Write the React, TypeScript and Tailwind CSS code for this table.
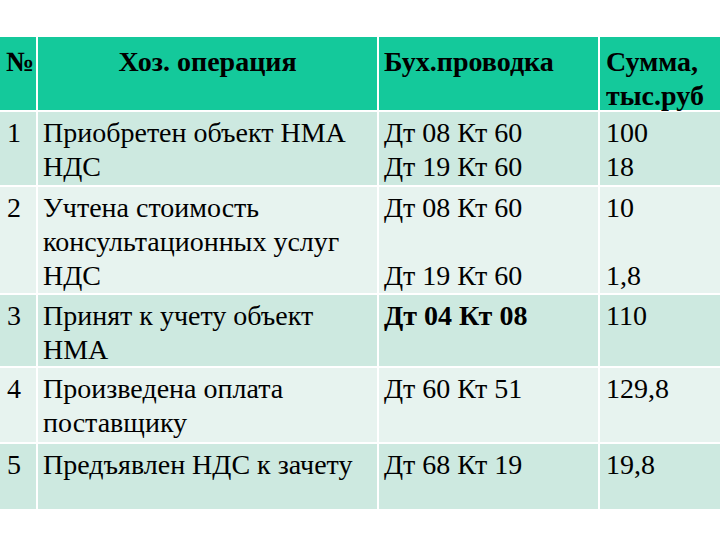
import React from 'react';

type Row = {
  n: string;
  op: string[];
  entries: React.ReactNode[];
  sums: string[];
  h: string;
  bg: string;
};

const rows: Row[] = [
  { n: '1', op: ['Приобретен объект НМА', 'НДС'], entries: ['Дт 08 Кт 60', 'Дт 19 Кт 60'], sums: ['100', '18'], h: 'h-[73px]', bg: 'bg-[#cde9e0]' },
  { n: '2', op: ['Учтена стоимость', 'консультационных услуг', 'НДС'], entries: ['Дт 08 Кт 60', '\u00a0', 'Дт 19 Кт 60'], sums: ['10', '\u00a0', '1,8'], h: 'h-[106px]', bg: 'bg-[#e7f3ef]' },
  { n: '3', op: ['Принят к учету объект', 'НМА'], entries: [<b key="b">Дт 04 Кт 08</b>], sums: ['110'], h: 'h-[71px]', bg: 'bg-[#cde9e0]' },
  { n: '4', op: ['Произведена оплата', 'поставщику'], entries: ['Дт 60 Кт 51'], sums: ['129,8'], h: 'h-[74px]', bg: 'bg-[#e7f3ef]' },
  { n: '5', op: ['Предъявлен НДС к зачету'], entries: ['Дт 68 Кт 19'], sums: ['19,8'], h: 'h-[65px]', bg: 'bg-[#cde9e0]' },
];

export default function App() {
  return (
    <div className="w-[720px] h-[540px] bg-white pt-[37px] text-black text-[28px] leading-[34px] font-['Liberation_Serif'] overflow-hidden">
      <div className="grid grid-cols-[36px_339px_219px_120px] gap-[2px] bg-white">
        {/* header */}
        <div className="h-[73px] bg-[#14c99b] pl-[6px] pt-[8px] font-bold">№</div>
        <div className="h-[73px] bg-[#14c99b] pt-[8px] font-bold text-center">Хоз. операция</div>
        <div className="h-[73px] bg-[#14c99b] pl-[5px] pt-[8px] font-bold">Бух.проводка</div>
        <div className="h-[73px] bg-[#14c99b] pl-[6px] pt-[8px] font-bold">
          <div>Сумма,</div>
          <div>тыс.руб</div>
        </div>

        {rows.map((r) => (
          <React.Fragment key={r.n}>
            <div className={`${r.h} ${r.bg} pl-[7px] pt-[4px]`}>{r.n}</div>
            <div className={`${r.h} ${r.bg} pl-[5px] pt-[4px]`}>
              {r.op.map((l, i) => (
                <div key={i}>{l}</div>
              ))}
            </div>
            <div className={`${r.h} ${r.bg} pl-[5px] pt-[4px]`}>
              {r.entries.map((l, i) => (
                <div key={i}>{l}</div>
              ))}
            </div>
            <div className={`${r.h} ${r.bg} pl-[6px] pt-[4px]`}>
              {r.sums.map((l, i) => (
                <div key={i}>{l}</div>
              ))}
            </div>
          </React.Fragment>
        ))}
      </div>
    </div>
  );
}
